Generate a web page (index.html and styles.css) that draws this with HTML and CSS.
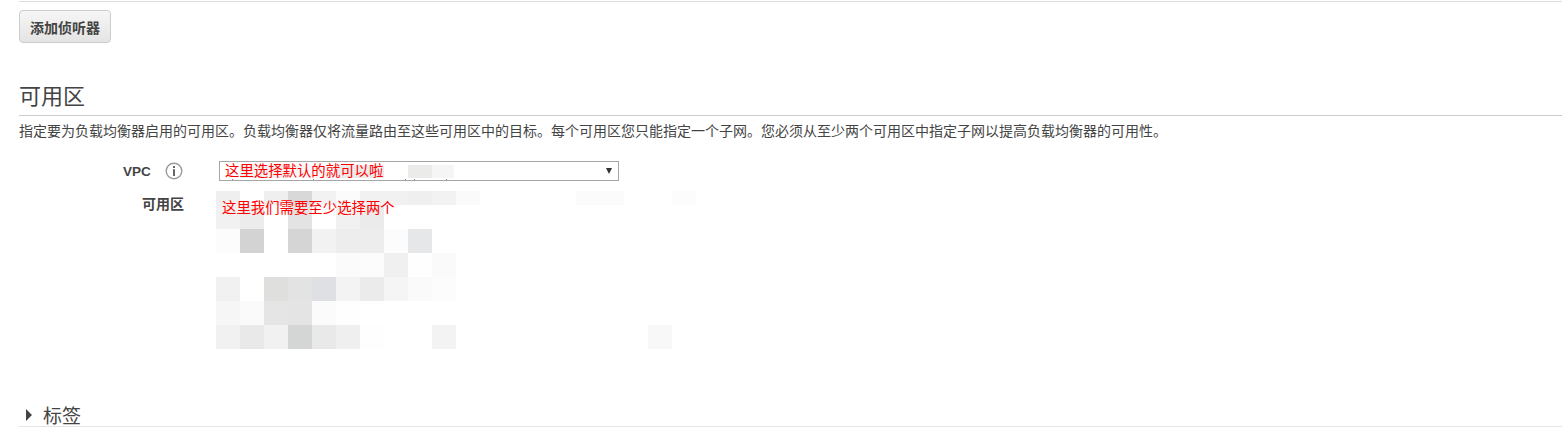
FILE: index.html
```html
<!DOCTYPE html>
<html lang="zh">
<head>
<meta charset="utf-8">
<title>可用区</title>
<link rel="stylesheet" href="styles.css">
</head>
<body>
<main class="page">
  <div class="toolbar"><button class="btn" type="button">添加侦听器</button></div>
  <section class="zones">
    <h2 class="title">可用区</h2>
    <p class="desc">指定要为负载均衡器启用的可用区。负载均衡器仅将流量路由至这些可用区中的目标。每个可用区您只能指定一个子网。您必须从至少两个可用区中指定子网以提高负载均衡器的可用性。</p>
    <div class="form">
      <div class="row vpc-row">
        <div class="label">VPC<svg class="info" viewBox="0 0 18 18" width="18" height="18"><circle cx="9" cy="9" r="7.8" fill="#fff" stroke="#9a9a9a" stroke-width="1.4"/><rect x="8" y="4" width="2" height="2" fill="#666"/><rect x="8" y="7.2" width="2" height="6.8" fill="#666"/></svg></div>
        <div class="select">
          <span class="veil v0"></span><span class="veil v4"></span><span class="veil v3"></span><span class="veil v1"></span><span class="veil v2"></span>
          <span class="dot d1"></span><span class="dot d2"></span><span class="dot d3"></span><span class="dot d4"></span><span class="dot d5"></span>
          <span class="note">这里选择默认的就可以啦</span>
          <span class="arrow"></span>
        </div>
      </div>
      <div class="row zone-row">
        <div class="label zone-label">可用区</div>
        <div class="mosaic">
          <div class="m short"><i class="ef"></i><i></i><i class="ef"></i><i class="d8"></i><i class="f2"></i><i class="fb"></i><i class="f1"></i><i class="f1"></i><i class="ef"></i><i class="f2"></i><i class="fa"></i><i></i><i></i><i></i><i></i><i class="fb"></i><i class="fb"></i><i></i><i></i><i class="fc"></i></div>
          <div class="m"><i class="f1"></i><i class="ec"></i><i></i><i class="e3"></i><i></i><i class="f1"></i><i class="eb"></i></div>
          <div class="m"><i class="fc"></i><i class="d3"></i><i></i><i class="d5"></i><i class="f2"></i><i class="ed"></i><i class="ed"></i><i class="fc"></i><i class="e6"></i></div>
          <div class="m"><i></i><i></i><i></i><i></i><i></i><i class="fb"></i><i class="fc"></i><i class="f0"></i><i class="fe"></i><i class="fa"></i></div>
          <div class="m"><i class="f1"></i><i></i><i class="df"></i><i class="e3"></i><i class="de"></i><i class="f3"></i><i class="eb"></i><i class="f5"></i><i class="fa"></i><i class="fc"></i></div>
          <div class="m"><i class="f6"></i><i class="fa"></i><i class="e5"></i><i class="e4"></i><i class="fb"></i><i class="fe"></i></div>
          <div class="m"><i class="f1"></i><i class="e9"></i><i class="f1"></i><i class="d4"></i><i class="e9"></i><i class="ef"></i><i class="fe"></i><i></i><i></i><i class="f3"></i><i></i><i></i><i></i><i></i><i></i><i></i><i></i><i></i><i class="f8"></i></div>
          <span class="note zone-note">这里我们需要至少选择两个</span>
        </div>
      </div>
    </div>
  </section>
  <section class="tags">
    <span class="caret"></span><h2 class="tags-title">标签</h2>
  </section>
</main>
</body>
</html>
```
FILE: styles.css
```css
* { box-sizing: border-box; }
html, body { margin: 0; padding: 0; background: #fff; }
body {
  font-family: "Liberation Sans", "Noto Sans CJK SC", sans-serif;
  font-size: 14px;
  color: #444;
  overflow: hidden;
}
.page { width: 1562px; height: 428px; padding-left: 19px; padding-top: 1px; }
.toolbar { border-top: 1px solid #ddd; padding-top: 8px; height: 44px; }
.btn {
  display: block;
  width: 92px;
  height: 33px;
  padding: 0;
  border: 1px solid #ccc;
  border-radius: 4px;
  background: linear-gradient(#f6f6f6, #e4e4e4);
  font: bold 14px "Liberation Sans", "Noto Sans CJK SC", sans-serif;
  color: #444;
}
.zones { padding-top: 36px; }
.title {
  margin: 0;
  height: 35px;
  font-size: 22px;
  font-weight: 400;
  line-height: 31px;
  color: #444;
  border-bottom: 1px solid #ccc;
}
.desc { margin: 5px 0 0; line-height: 20px; white-space: nowrap; }
.form { margin-top: 20px; }
.row { display: flex; }
.label {
  width: 165px;
  font-weight: bold;
  color: #444;
  font-size: 14px;
}
.vpc-row { height: 20px; }
.vpc-row .label { display: flex; align-items: center; padding-left: 104px; gap: 14px; font-size: 13.5px; }
.info { flex: none; }
.zone-row { margin-top: 10px; }
.zone-label { text-align: right; line-height: 26px; }
.select {
  position: relative;
  margin-left: 35px;
  width: 400px;
  height: 20px;
  border: 1px solid #a6a6a6;
  background: #fff;
  display: flex;
  align-items: center;
  padding-left: 5px;
}
.veil { position: absolute; top: 3px; height: 13px; }
.v0 { left: 20px; width: 48px; background: #f1f1f1; }
.v4 { left: 68px; width: 48px; background: #f8f8f8; }
.v3 { left: 116px; width: 48px; background: #ebebeb; }
.v1 { left: 188px; width: 24px; background: #ebebe9; }
.v2 { left: 212px; width: 22px; background: #f5f5f5; }
.dot { position: absolute; top: 17px; width: 1px; height: 1px; background: #8a7a9a; }
.d1 { left: 12px; } .d2 { left: 93px; } .d3 { left: 185px; } .d4 { left: 194px; } .d5 { left: 226px; }
.note { position: relative; color: #f00; font-size: 14.4px; line-height: 16px; white-space: nowrap; }
.arrow {
  position: absolute;
  right: 6px;
  top: 6px;
  border-left: 3px solid transparent;
  border-right: 3px solid transparent;
  border-top: 6px solid #333;
}
.mosaic { position: relative; margin-left: 32px; width: 480px; }
.m { display: flex; height: 24px; }
.m.short { height: 14px; }
.m i { display: block; width: 24px; flex: none; background: #fff; }
.zone-note { position: absolute; left: 6px; top: 9px; }
.m .ef { background: #efefef; } .m .d8 { background: #d8d8d8; } .m .f2 { background: #f2f2f2; }
.m .fb { background: #fbfbfb; } .m .f1 { background: #f1f1f1; } .m .fa { background: #fafafa; }
.m .fe { background: #fefefe; } .m .fc { background: #fcfcfc; } .m .ec { background: #ececec; }
.m .e3 { background: #e3e3e3; } .m .eb { background: #ebebeb; } .m .d3 { background: #d3d3d3; }
.m .d5 { background: #d5d5d5; } .m .ed { background: #ededed; } .m .e6 { background: #e6e7e9; }
.m .f0 { background: #f0f0f0; } .m .df { background: #dfdfdd; } .m .de { background: #dee0e3; }
.m .f3 { background: #f3f3f3; } .m .f5 { background: #f5f5f5; } .m .f6 { background: #f6f6f6; }
.m .e5 { background: #e5e5e5; } .m .e4 { background: #e4e4e4; } .m .e9 { background: #e9e9e9; }
.m .d4 { background: #d4d6d5; } .m .f8 { background: #f8f8f8; }
.tags {
  display: flex;
  align-items: center;
  margin-top: 50px;
  height: 28px;
  border-bottom: 1px solid #e5e5e5;
  padding: 4px 0 0 7px;
}
.caret {
  border-top: 6px solid transparent;
  border-bottom: 6px solid transparent;
  border-left: 6px solid #444;
  margin-right: 11px;
}
.tags-title { margin: 0; font-size: 19px; font-weight: 400; color: #444; }
```
